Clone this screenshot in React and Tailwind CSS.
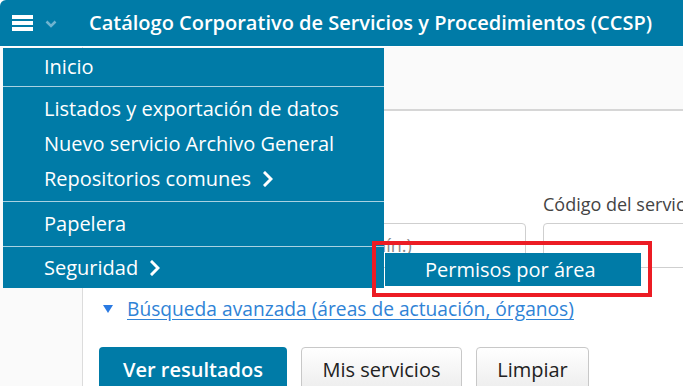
import React from 'react';

const font = { fontFamily: '"Open Sans", "Noto Sans", sans-serif' };

const Chevron = ({ className = '' }) => (
  <svg className={className} width="10" height="16" viewBox="0 0 10 16" fill="none">
    <path d="M2 2l6 6-6 6" stroke="white" strokeWidth="3" strokeLinecap="square" />
  </svg>
);

const MenuItem = ({ children, arrow }) => (
  <div className="flex h-[35px] items-center pl-[41px] text-[20px] text-white">
    <span>{children}</span>
    {arrow && <Chevron className="ml-[12px]" />}
  </div>
);

export default function App() {
  return (
    <div className="relative h-[386px] w-[683px] overflow-hidden bg-white" style={font}>
      {/* header */}
      <header className="flex h-[46px] items-center rounded-tl-[6px] bg-[#007ba7] text-white">
        <svg className="ml-[12px]" width="21" height="16" viewBox="0 0 21 16">
          <rect y="0" width="21" height="4" fill="white" />
          <rect y="6" width="21" height="4" fill="white" />
          <rect y="12" width="21" height="4" fill="white" />
        </svg>
        <svg className="ml-[12px] mt-[2px]" width="12" height="8" viewBox="0 0 12 8" fill="none">
          <path d="M1.5 1.5l4.5 4.5 4.5-4.5" stroke="#6fb4d0" strokeWidth="2.5" />
        </svg>
        <h1 className="ml-[32px] whitespace-nowrap text-[20px] font-semibold">
          Catálogo Corporativo de Servicios y Procedimientos (CCSP)
        </h1>
      </header>

      {/* page body */}
      <div className="mt-[1px] flex h-[339px]">
        <aside className="w-[83px] shrink-0 border-r border-[#dcdcdc] bg-[#fafafa]" />
        <main className="flex w-[760px] shrink-0 flex-col">
          <div className="h-[64px] shrink-0 border-b-2 border-[#d6d6d6] bg-[#fafafa]" />
          <div className="shrink-0 pl-[16px] pt-[80px]">
            <div className="flex gap-[17px]">
              <div className="w-[427px] shrink-0">
                <label className="block h-[32px] text-[18px] leading-[27px] text-[#444]">Denominación del servicio</label>
                <div className="flex h-[45px] items-center whitespace-nowrap rounded-[4px] border border-[#cfcfcf] pl-[26px] text-[18px] text-[#8a8a8a]">
                  Palabras clave de búsqueda (mín.)
                </div>
              </div>
              <div className="w-[300px] shrink-0">
                <label className="block h-[32px] whitespace-nowrap text-[18px] leading-[27px] text-[#444]">Código del servicio</label>
                <div className="h-[45px] rounded-[4px] border border-[#cfcfcf]" />
              </div>
            </div>

            <div className="mt-[28px] flex h-[26px] items-center">
              <svg className="ml-[4px]" width="10" height="8" viewBox="0 0 10 8">
                <path d="M0 0h10L5 8z" fill="#2a7ae2" />
              </svg>
              <a href="#" className="ml-[14px] whitespace-nowrap text-[19.2px] text-[#2f83d6] underline underline-offset-[3px]">
                Búsqueda avanzada (áreas de actuación, órganos)
              </a>
            </div>

            <div className="mt-[25px] flex gap-[14px]">
              <button className="h-[46px] w-[188px] rounded-[4px] bg-[#007ba7] text-[20px] font-semibold text-white">
                Ver resultados
              </button>
              <button className="h-[46px] w-[161px] rounded-[4px] border border-[#c8c8c8] bg-gradient-to-b from-white to-[#ececec] text-[20px] text-[#222]">
                Mis servicios
              </button>
              <button className="h-[46px] w-[113px] rounded-[4px] border border-[#c8c8c8] bg-gradient-to-b from-white to-[#ececec] text-[20px] text-[#222]">
                Limpiar
              </button>
            </div>
          </div>
        </main>
      </div>

      {/* open dropdown menu */}
      <nav className="absolute left-[3px] top-[48px] w-[381px] bg-[#007ba7]">
        <div className="flex h-[38px] flex-col justify-center">
          <MenuItem>Inicio</MenuItem>
        </div>
        <div className="flex h-[115px] flex-col justify-center border-t border-[#a9d2e2]">
          <MenuItem>Listados y exportación de datos</MenuItem>
          <MenuItem>Nuevo servicio Archivo General</MenuItem>
          <MenuItem arrow>Repositorios comunes</MenuItem>
        </div>
        <div className="flex h-[45px] flex-col justify-center border-t border-[#a9d2e2]">
          <MenuItem>Papelera</MenuItem>
        </div>
        <div className="flex h-[42px] flex-col justify-center border-t border-[#a9d2e2]">
          <MenuItem arrow>Seguridad</MenuItem>
        </div>
      </nav>

      {/* submenu */}
      <div className="absolute left-[385px] top-[253px] flex h-[33px] w-[256px] items-center bg-[#007ba7] pl-[40px] text-[20px] text-white">
        Permisos por área
      </div>

      {/* highlight annotation */}
      <div className="absolute left-[372px] top-[241px] h-[56px] w-[280px] border-[4px] border-[#ec1c24]" />
    </div>
  );
}
